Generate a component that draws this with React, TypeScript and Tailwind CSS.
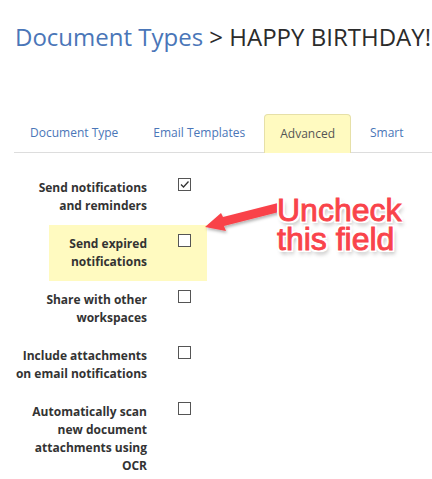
import React from 'react';

const font = { fontFamily: '"Open Sans", "Liberation Sans", sans-serif' };

interface Setting {
  label: string[];
  checked: boolean;
  highlight?: boolean;
}

const settings: Setting[] = [
  { label: ['Send notifications', 'and reminders'], checked: true },
  { label: ['Send expired', 'notifications'], checked: false, highlight: true },
  { label: ['Share with other', 'workspaces'], checked: false },
  { label: ['Include attachments', 'on email notifications'], checked: false },
  { label: ['Automatically scan', 'new document', 'attachments using', 'OCR'], checked: false },
];

const tabs = ['Document Type', 'Email Templates', 'Advanced', 'Smart'];

const Checkbox: React.FC<{ checked: boolean }> = ({ checked }) => (
  <div className="flex h-[13px] w-[13px] shrink-0 items-center justify-center border border-[#555] bg-white">
    {checked && (
      <svg width="11" height="11" viewBox="0 0 11 11">
        <path d="M2 5.5 L4.5 8 L9.5 2.5" fill="none" stroke="#333" strokeWidth="1.3" />
      </svg>
    )}
  </div>
);

const SettingRow: React.FC<{ setting: Setting }> = ({ setting }) => {
  const label = (
    <div className="mt-px text-right text-[12px] font-bold leading-[18px] text-[#333]">
      {setting.label.map((line) => (
        <div key={line}>{line}</div>
      ))}
    </div>
  );

  if (setting.highlight) {
    return (
      <div className="ml-[49px] flex h-[56px] w-[158px] items-start bg-[#fffac0] pt-[9px]">
        <div className="w-[98px]">{label}</div>
        <div className="ml-[31px]">
          <Checkbox checked={setting.checked} />
        </div>
      </div>
    );
  }

  return (
    <div className="ml-[14px] flex items-start pt-[9px] pb-[10px]">
      <div className="w-[133px]">{label}</div>
      <div className="ml-[31px]">
        <Checkbox checked={setting.checked} />
      </div>
    </div>
  );
};

export default function App() {
  return (
    <div className="relative h-[479px] w-[432px] overflow-hidden bg-white" style={font}>
      <h1 className="pl-[15px] pt-[20px] text-[24px] leading-[34px] font-normal whitespace-nowrap">
        <span className="text-[#4a76b8]">Document Types</span>
        <span className="text-[#2b2b2b]"> &gt; HAPPY BIRTHDAY!</span>
      </h1>

      <div className="mt-[60px] ml-[14px] flex h-[39px] items-stretch gap-[3px] border-b border-[#ddd]">
        {tabs.map((tab) => (
          <div
            key={tab}
            className={
              tab === 'Advanced'
                ? '-mb-px flex items-center whitespace-nowrap rounded-t-[4px] border border-b-0 border-[#e6e0a8] bg-[#fffac0] px-[15px] text-[12px] text-[#555]'
                : 'flex items-center whitespace-nowrap px-4 text-[12px] text-[#4a76b8]'
            }
          >
            {tab}
          </div>
        ))}
      </div>

      <div className="mt-4 flex flex-col">
        {settings.map((s) => (
          <SettingRow key={s.label[0]} setting={s} />
        ))}
      </div>

      {/* annotation */}
      <svg className="absolute left-0 top-0" width="432" height="479" viewBox="0 0 432 479">
        <defs>
          <filter id="sh" x="-20%" y="-50%" width="140%" height="200%">
            <feDropShadow dx="1" dy="2" stdDeviation="1.5" floodColor="#000" floodOpacity="0.3" />
          </filter>
        </defs>
        <g filter="url(#sh)">
          <path d="M278 203 L223 217 L221 213 L205 227 L226 231 L224 226 L279 212 Z" fill="#f9434a" />
        </g>
      </svg>
      <div
        className="absolute left-[277px] top-[196px] text-[32px] leading-[29px] text-[#f9434a] [-webkit-text-stroke:0.9px_#f9434a] [text-shadow:2px_0_0_#fff,-2px_0_0_#fff,0_2px_0_#fff,0_-2px_0_#fff,2px_2px_0_#fff,-2px_-2px_0_#fff,2px_-2px_0_#fff,-2px_2px_0_#fff,2px_4px_4px_rgba(0,0,0,0.35)]"
        style={{ fontFamily: '"Liberation Sans", Arial, sans-serif' }}
      >
        <div>Uncheck</div>
        <div>this field</div>
      </div>
    </div>
  );
}
